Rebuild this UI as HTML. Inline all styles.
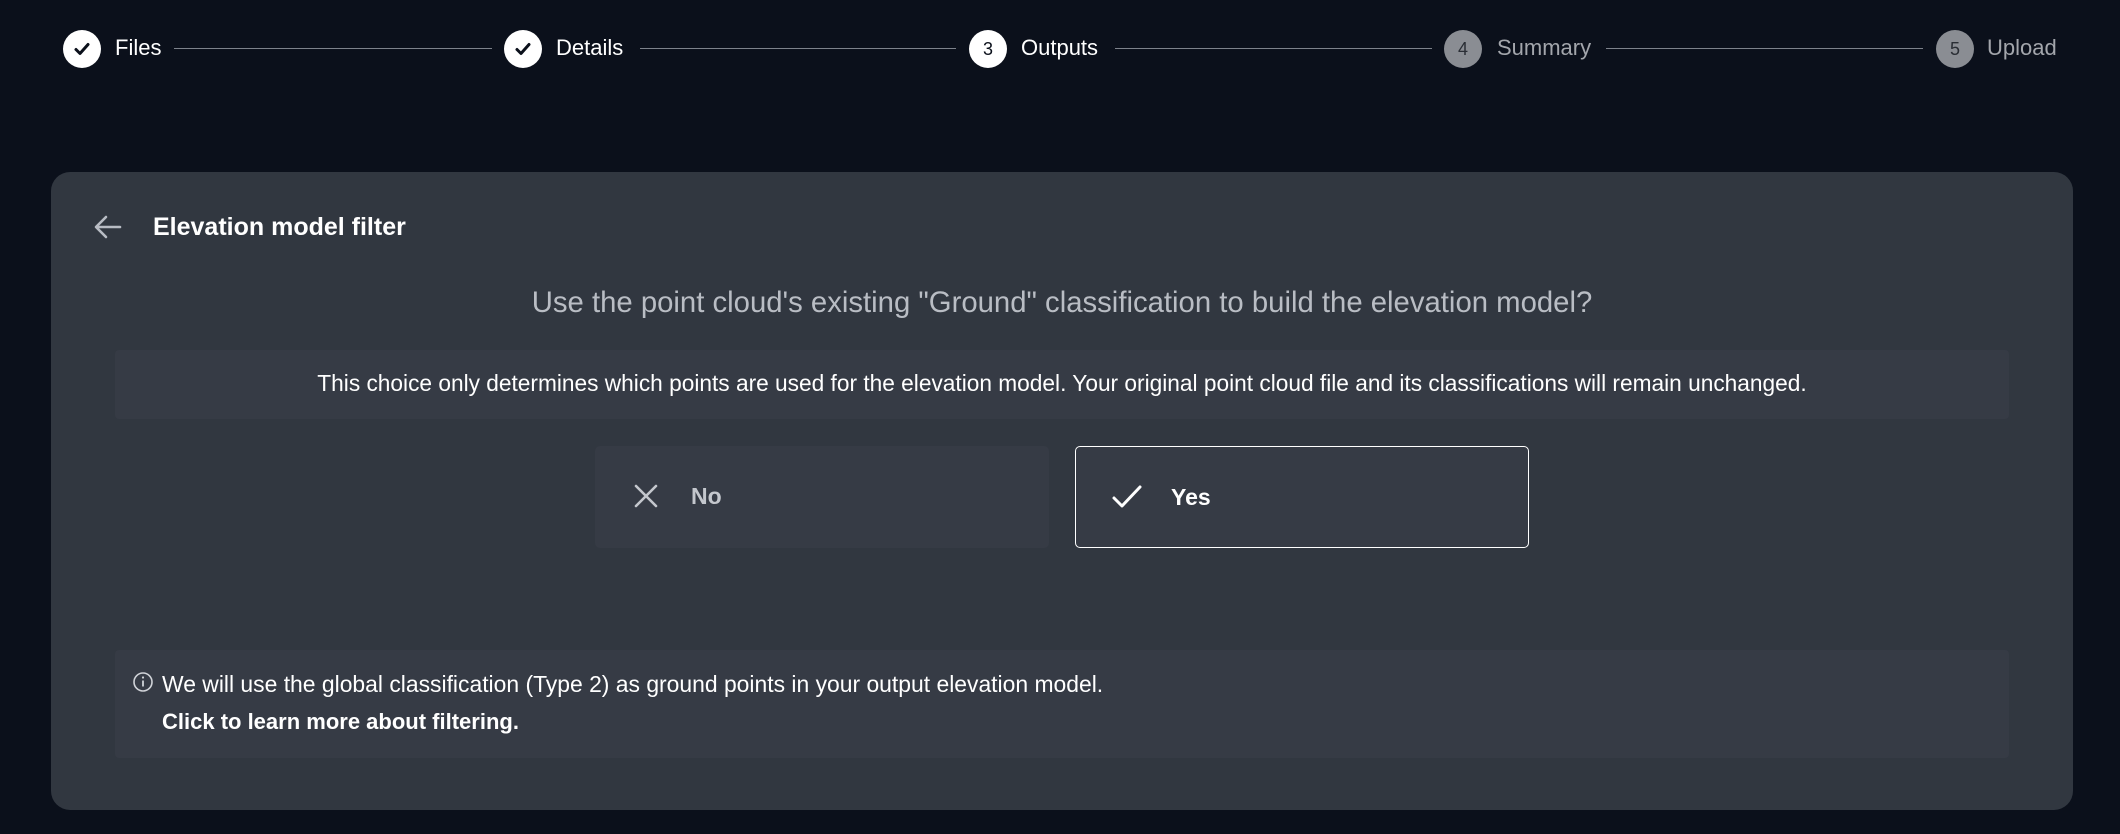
<!DOCTYPE html>
<html><head><meta charset="utf-8"><style>
*{box-sizing:border-box;margin:0;padding:0}
body{width:2120px;height:834px;background:#0b101b;font-family:"Liberation Sans",sans-serif;color:#fff;position:relative;overflow:hidden}
.abs{position:absolute}
.circ{position:absolute;width:38px;height:38px;border-radius:50%;top:30px;display:flex;align-items:center;justify-content:center;font-size:18px}
.lbl{position:absolute;top:35px;font-size:22px;line-height:26px}
.line{position:absolute;top:48px;height:1px;background:#7d828b}
.card{position:absolute;left:51px;top:172px;width:2022px;height:638px;background:#313740;border-radius:19px}
.box{position:absolute;background:#363b45;border-radius:4px}
.btn{position:absolute;top:446px;width:454px;height:102px;background:#363b45;border-radius:5px}
</style></head><body>
<div class="circ" style="left:63px;background:#fff"><svg width="22" height="22" viewBox="0 0 22 22"><path d="M5 11.5l4 4 8-9" stroke="#0b101b" stroke-width="3" fill="none" stroke-linecap="round" stroke-linejoin="round"/></svg></div>
<div class="lbl" style="left:115px">Files</div>
<div class="line" style="left:174px;width:318px"></div>
<div class="circ" style="left:504px;background:#fff"><svg width="22" height="22" viewBox="0 0 22 22"><path d="M5 11.5l4 4 8-9" stroke="#0b101b" stroke-width="3" fill="none" stroke-linecap="round" stroke-linejoin="round"/></svg></div>
<div class="lbl" style="left:556px">Details</div>
<div class="line" style="left:640px;width:316px"></div>
<div class="circ" style="left:969px;background:#fff;color:#0b101b">3</div>
<div class="lbl" style="left:1021px">Outputs</div>
<div class="line" style="left:1115px;width:317px"></div>
<div class="circ" style="left:1444px;background:#8a8d93;color:#2a2e35">4</div>
<div class="lbl" style="left:1497px;color:#a3a6ac">Summary</div>
<div class="line" style="left:1606px;width:317px"></div>
<div class="circ" style="left:1936px;background:#8a8d93;color:#2a2e35">5</div>
<div class="lbl" style="left:1987px;color:#a3a6ac">Upload</div>

<div class="card"></div>
<svg class="abs" style="left:93px;top:213px" width="30" height="28" viewBox="0 0 30 28"><path d="M27 14H4M13 4L3 14l10 10" stroke="#b8bcc4" stroke-width="2.6" fill="none" stroke-linecap="round" stroke-linejoin="round"/></svg>
<div class="abs" style="left:153px;top:212px;font-size:25px;font-weight:bold;line-height:30px">Elevation model filter</div>
<div class="abs" style="left:51px;width:2022px;top:286px;text-align:center;font-size:29.3px;color:#b9bdc4;line-height:34px">Use the point cloud's existing "Ground" classification to build the elevation model?</div>
<div class="box" style="left:115px;top:350px;width:1894px;height:69px"></div>
<div class="abs" style="left:115px;width:1894px;top:370px;text-align:center;font-size:22.7px;line-height:26px">This choice only determines which points are used for the elevation model. Your original point cloud file and its classifications will remain unchanged.</div>
<div class="btn" style="left:595px"></div>
<svg class="abs" style="left:633px;top:483px" width="26" height="26" viewBox="0 0 26 26"><path d="M3 3l20 20M23 3L3 23" stroke="#c4c7cd" stroke-width="2.6" stroke-linecap="round"/></svg>
<div class="abs" style="left:691px;top:483px;font-size:23px;font-weight:bold;color:#c4c7cd">No</div>
<div class="btn" style="left:1075px;border:1.5px solid #fff"></div>
<svg class="abs" style="left:1111px;top:483px" width="32" height="28" viewBox="0 0 32 28"><path d="M3 15l8 8L29 4" stroke="#fff" stroke-width="3" fill="none" stroke-linecap="round" stroke-linejoin="round"/></svg>
<div class="abs" style="left:1171px;top:484px;font-size:23px;font-weight:bold">Yes</div>
<div class="box" style="left:115px;top:650px;width:1894px;height:108px"></div>
<svg class="abs" style="left:132px;top:671px" width="22" height="22" viewBox="0 0 22 22"><circle cx="11" cy="11" r="9" stroke="#d0d3d8" stroke-width="1.6" fill="none"/><path d="M11 9.5v6" stroke="#d0d3d8" stroke-width="1.8"/><circle cx="11" cy="6.5" r="1.1" fill="#d0d3d8"/></svg>
<div class="abs" style="left:162px;top:671px;font-size:22.9px;line-height:26px">We will use the global classification (Type 2) as ground points in your output elevation model.</div>
<div class="abs" style="left:162px;top:709px;font-size:22px;font-weight:bold;line-height:26px">Click to learn more about filtering.</div>
</body></html>
